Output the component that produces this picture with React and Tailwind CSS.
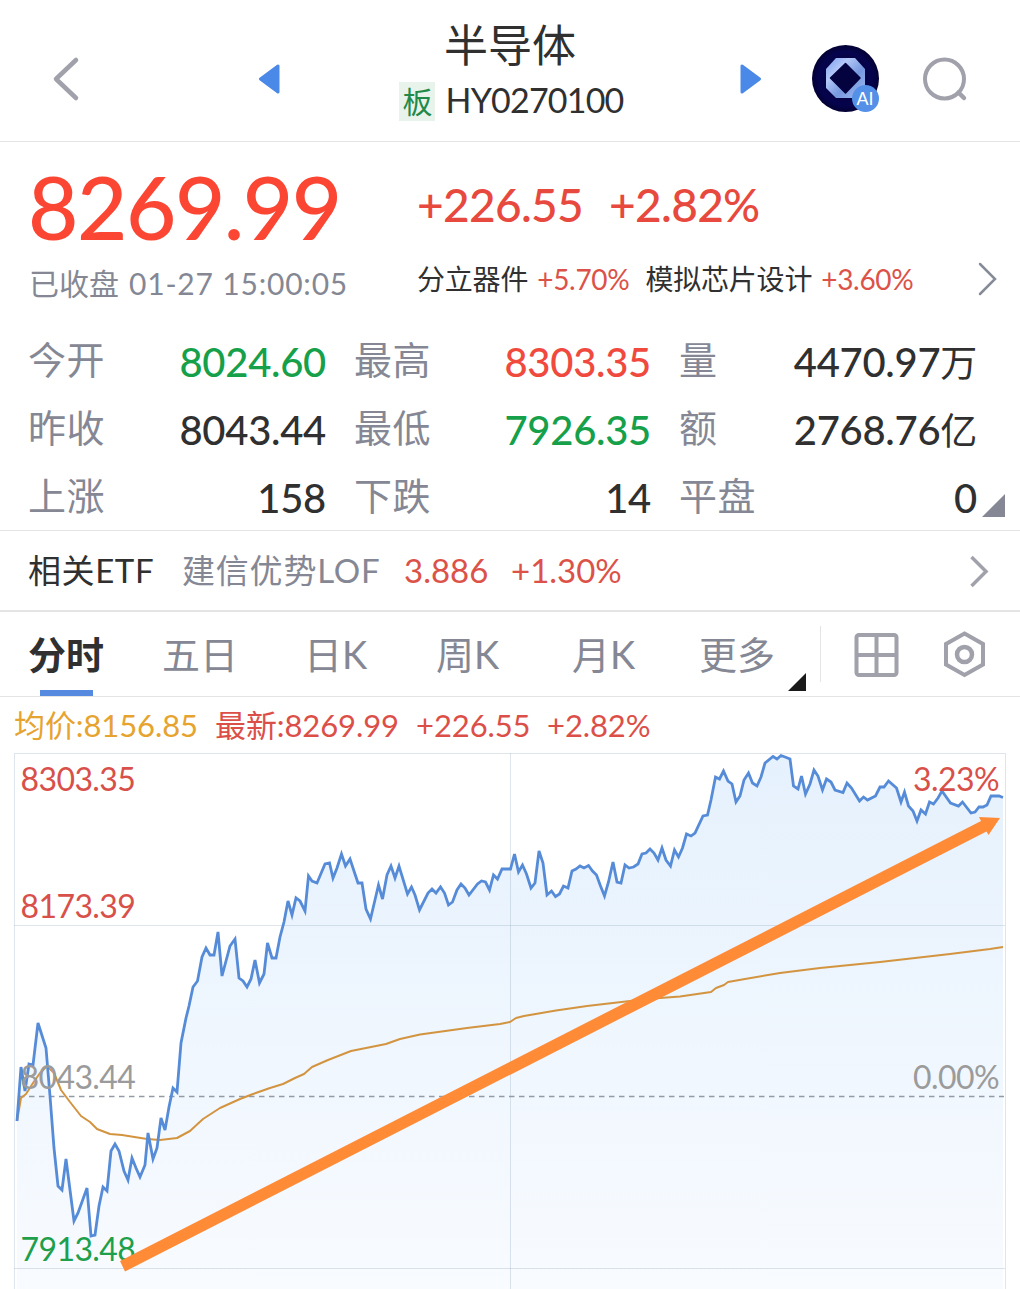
import React from 'react';

const RED = 'text-[#f04a3e]';
const GREEN = 'text-[#16a04a]';
const DARK = 'text-[#303030]';

const stats = [
  { label: '今开', value: '8024.60', color: GREEN },
  { label: '最高', value: '8303.35', color: RED },
  { label: '量', value: '4470.97', unit: '万', color: DARK },
  { label: '昨收', value: '8043.44', color: DARK },
  { label: '最低', value: '7926.35', color: GREEN },
  { label: '额', value: '2768.76', unit: '亿', color: DARK },
  { label: '上涨', value: '158', color: DARK },
  { label: '下跌', value: '14', color: DARK },
  { label: '平盘', value: '0', color: DARK },
];

const tabs = [
  { label: '分时', width: 'w-[134px]', active: true },
  { label: '五日', width: 'w-[142px]' },
  { label: '日K', width: 'w-[132px]' },
  { label: '周K', width: 'w-[136px]' },
  { label: '月K', width: 'w-[127px]' },
  { label: '更多', width: 'w-[77px]' },
];

const price =
  '17,1121 21,1067 25,1091 29,1064 33,1065 38,1023 46,1048 50,1096 54,1148 58,1186 62,1190 66,1159 70,1190 74,1221 78,1213 87,1188 91,1236 95,1235 99,1206 103,1187 107,1191 111,1151 115,1144 119,1151 124,1171 128,1180 132,1158 136,1168 140,1177 145,1165 148,1133 153,1159 157,1148 161,1118 165,1130 169,1107 173,1088 177,1092 181,1043 186,1018 189,1006 193,987 ' +
  '197.5,981 202,957 206,948 210,955 214,955 218,932 222,976 230,946 235,939 239,978 243,981 247,987 251,979 255,960 259.5,983 264,974 267.5,943 272,958 276,958 280,937 284,922 288,901 292,915 296,898 300,901 305,911 308.5,876 312,881 317,883 325,864 329.5,863 333,878 337,868 341.5,854 345.5,866 350,859 358,883 362,883 366,909 370.5,919 378.5,885 382.5,899 387,875 391,866 395,878 399,866 ' +
  '407.5,894 411.5,887 415,895 419.5,910 428,893 432,889 436,893 440.5,887 444.5,893 448.5,905 452.5,902 457,890 461,884 465,888 469,895 477.5,884 481.5,881 485.5,882 489.5,890 493.5,875 497.5,879 502,869 510.5,869 514.5,854 518.5,872 522.5,865 526.5,874 531,888 535,883 539,851 543,863 547,895 551.5,891 555.5,896.5 559.5,894 563.5,886 568,888 572,871 576,869 580,866 584,868 588.5,865.5 592.5,871 596.5,875 600.5,886 604.5,896 ' +
  '608.5,882 613,862 617,882 621,883 625,865 629,868 633.5,867 638,864 642,854 646,853 650,849 654,853 658,860 662,848 666,860 670.5,866 674.5,850 678.5,857 682.5,848 686.5,834 691,836 695,833 703,816 707.5,815 711,800 715.5,777 719.5,779 723.5,771 728,781 732,784 736,802 740,796 744,780 748.5,773 752.5,783 757,786 761,777 765,763 773,756.5 777,759 781,755.5 785,757 790,759 793.5,786 798,789 801.5,776 ' +
  '805.5,794 810,784 814,770 818,776 822.5,790 826.5,779 831,782 835,790 843,792.5 847,783 851.5,788 859.5,801 863.5,797 867.5,800 875.5,796 880,787 884,787 888.5,781 896.5,788 901,802 904.5,792 908.5,806 913,811 917,821 921,810 925.5,814 929.5,802 933.5,804 938,798 942,791 950.5,803 958.5,806 962.5,802 971,813 975,812 979,807 983,807 987,805 991,796 999,796 1003,797.5';

const average =
  '17,1121 21,1098 26,1094 33,1083 40,1073 47,1066 54,1073 61,1090 70,1102 81,1116 90,1122 97,1129 110,1134 122,1135 147,1139 160,1140 177,1138 190,1131 203,1119 220,1108 240,1099 253,1094 270,1088 283,1084 295,1078 304,1074 312,1067 328,1060 351,1051 386,1044 400,1039 420,1034.5 467,1028 500,1024 510,1022 516,1018 524,1016 556,1010.5 587,1006 630,1001 660,998 680,996.5 711,992 716,988 724,985 728,982 745,979 780,973 820,968 880,962 950,954 990,949 1003,947';

function Header() {
  return (
    <header className="flex h-[142px] items-start border-b border-[#e4e4e4]">
      <svg className="mt-[55px] ml-[50px] h-12 w-8" viewBox="0 0 32 48" fill="none">
        <path d="M26 5 L6 24 L26 43" stroke="#a0a1aa" strokeWidth="4.5" strokeLinecap="round" strokeLinejoin="round" />
      </svg>
      <svg className="mt-16 ml-[176px] h-[30px] w-[22px]" viewBox="0 0 22 30">
        <path d="M20 2 V28 L2.500 15 Z" fill="#4b89e8" stroke="#4b89e8" strokeWidth="3" strokeLinejoin="round" />
      </svg>
      <div className="ml-[60px] flex w-[340px] flex-col items-center">
        <h1 className="mt-[19px] text-[44px] leading-[52px] text-[#303030]">半导体</h1>
        <div className="mt-[12px] flex h-9 items-center gap-[10px] pl-[3px]">
          <span className="flex h-[39px] w-9 items-center justify-center bg-[#e8f3ec] text-[30px] leading-none text-[#1f8a4a]">板</span>
          <span className="pb-[3px] text-[34px] leading-none tracking-[-0.8px] text-[#303030]">HY0270100</span>
        </div>
      </div>
      <svg className="mt-16 ml-[60px] h-[30px] w-[22px]" viewBox="0 0 22 30">
        <path d="M2 2 V28 L19.500 15 Z" fill="#4b89e8" stroke="#4b89e8" strokeWidth="3" strokeLinejoin="round" />
      </svg>
      <svg className="mt-[45px] ml-[50px] h-[67px] w-[68px]" viewBox="0 0 68 67">
        <defs>
          <radialGradient id="orb">
            <stop offset="0.500" stopColor="#04023f" />
            <stop offset="0.800" stopColor="#06034e" />
            <stop offset="1" stopColor="#030132" />
          </radialGradient>
          <linearGradient id="oct" x1="0" y1="0" x2="1" y2="1">
            <stop offset="0" stopColor="#7d9df0" />
            <stop offset="0.300" stopColor="#b4c8f7" />
            <stop offset="0.600" stopColor="#7698df" />
            <stop offset="1" stopColor="#a5bdf2" />
          </linearGradient>
        </defs>
        <circle cx="33.500" cy="33.500" r="33.500" fill="url(#orb)" />
        <path d="M24 13 H43 L53 24 V43 L43 53 H24 L14 43 V24 Z" fill="url(#oct)" />
        <path d="M33.500 18.500 L48 33 L33.500 48 L18.500 33 Z" fill="#04023f" stroke="#04023f" strokeWidth="1.500" strokeLinejoin="round" />
        <circle cx="53.500" cy="53.500" r="13.500" fill="#5490e8" />
        <text x="53" y="60" textAnchor="middle" fontSize="18" fill="#fff" fontFamily="Liberation Sans">AI</text>
      </svg>
      <svg className="mt-[55px] ml-[41px] h-12 w-12" viewBox="0 0 48 48" fill="none" stroke="#a0a1aa" strokeWidth="4">
        <circle cx="23.500" cy="24" r="19.500" />
        <path d="M37.500 37.500 L43 43" strokeWidth="4.500" strokeLinecap="round" />
      </svg>
    </header>
  );
}

function Quote() {
  return (
    <section className="h-[389px] border-b border-[#e4e4e4]">
      <div className="flex h-[185px] pl-[28px]">
        <div className="w-[389px]">
          <div className="mt-[18px] text-[87px] leading-[94px] font-medium tracking-[-1.5px] text-[#fb4634]">8269.99</div>
          <div className="mt-[10px] flex gap-[10px] pl-px text-[30px] leading-[38px] text-[#858894]">
            <span>已收盘</span>
            <span className="tracking-[0.8px]">01-27 15:00:05</span>
          </div>
        </div>
        <div>
          <div className="mt-[36px] flex gap-[26px] text-[46px] leading-[54px] font-medium tracking-[-0.7px] text-[#e8493e]">
            <span>+226.55</span>
            <span>+2.82%</span>
          </div>
          <div className="mt-[29px] flex text-[28px] leading-[36px] tracking-[-0.2px] text-[#303030]">
            <span>分立器件</span>
            <span className="ml-[9px] tracking-[-0.3px] text-[#dc5248]">+5.70%</span>
            <span className="ml-4">模拟芯片设计</span>
            <span className="ml-[9px] tracking-[-0.3px] text-[#dc5248]">+3.60%</span>
          </div>
        </div>
        <svg className="mt-[118px] ml-[62px] h-10 w-6" viewBox="0 0 24 40" fill="none">
          <path d="M5 4 L20 19 L5 34" stroke="#858c98" strokeWidth="2.500" strokeLinecap="round" />
        </svg>
      </div>
      <div className="flex items-end pl-[28px]">
        <div className="grid grid-cols-[298px_297px_298px] gap-x-[28px]">
          {stats.map((s) => (
            <div key={s.label} className="flex h-[68px] items-center justify-between">
              <span className="pb-[5px] text-[38px] leading-[60px] tracking-[0.4px] text-[#858894]">{s.label}</span>
              <span className={`pt-[2px] text-[40px] leading-[60px] font-medium tracking-[-0.3px] ${s.color}`}>
                {s.value}
                {s.unit && <span className="text-[37px] font-normal">{s.unit}</span>}
              </span>
            </div>
          ))}
        </div>
        <svg className="mb-[14px] ml-[5px] h-[23px] w-[23px]" viewBox="0 0 23 23">
          <path d="M23 0 V23 H0 Z" fill="#858894" />
        </svg>
      </div>
    </section>
  );
}

function EtfRow() {
  return (
    <section className="flex h-[81px] items-center border-b-2 border-[#e4e4e4] pl-[28px] text-[33px] leading-[60px]">
      <span className="w-[154px] pb-[2px] tracking-[0.6px] text-[#303030]">相关ETF</span>
      <span className="w-[222px] pb-[2px] tracking-[0.8px] text-[#858894]">建信优势LOF</span>
      <span className="w-[107px] pb-[2px] text-[#dc5248]">3.886</span>
      <span className="w-[457px] pb-[2px] text-[#dc5248]">+1.30%</span>
      <svg className="h-9 w-6" viewBox="0 0 24 36" fill="none">
        <path d="M3.500 4 L18 18.500 L3.500 33" stroke="#a0a1aa" strokeWidth="3.500" />
      </svg>
    </section>
  );
}

function TabBar() {
  return (
    <nav className="flex h-[85px] border-b border-[#e4e4e4] pl-7">
      {tabs.map((tab) => (
        <div
          key={tab.label}
          className={`flex shrink-0 flex-col text-[38px] leading-[84px] ${tab.width} ${
            tab.active ? 'font-bold text-[#303030]' : 'text-[#858894]'
          }`}
        >
          <span className="h-[78px]">{tab.label}</span>
          {tab.active && <span className="ml-3 h-[6px] w-[53px] bg-[#558ae0]" />}
        </div>
      ))}
      <svg className="mt-[61px] ml-[12px] h-[18px] w-[18px]" viewBox="0 0 18 18">
        <path d="M18 0 V18 H0 Z" fill="#1a1a1a" />
      </svg>
      <div className="mt-[14px] ml-[14px] h-14 w-px bg-[#e4e4e4]" />
      <svg className="mt-[20px] ml-[33px] h-[46px] w-[46px]" viewBox="0 0 46 46" fill="none" stroke="#a0a1aa" strokeWidth="4">
        <rect x="2.500" y="3" width="40" height="40" rx="2.500" />
        <path d="M22.500 3 V43 M2.500 23 H42.500" />
      </svg>
      <svg className="mt-[19px] ml-[43px] h-12 w-[46px]" viewBox="0 0 46 48" fill="none" stroke="#a0a1aa" strokeWidth="4">
        <path d="M21.500 2.500 L40 13 V33.500 L21.500 44 L3 33.500 V13 Z" />
        <circle cx="21.500" cy="23.500" r="7.500" strokeWidth="4.500" />
      </svg>
    </nav>
  );
}

function Chart() {
  return (
    <section>
      <div className="flex h-[56px] pl-[14px] text-[31px] leading-[56px] tracking-[-0.1px] text-[#dc4f48]">
        <span className="w-[201px] text-[#e6a32e]">均价:8156.85</span>
        <span className="w-[201px]">最新:8269.99</span>
        <span className="w-[131px]">+226.55</span>
        <span>+2.82%</span>
      </div>
      <svg
        className="block h-[536px] w-[1020px] tracking-[-0.6px]"
        viewBox="0 753 1020 536"
        fontFamily="Lato"
        fontSize="32"
      >
        <defs>
          <linearGradient id="area" gradientUnits="userSpaceOnUse" x1="0" y1="753" x2="0" y2="1289">
            <stop offset="0" stopColor="#e5f1fd" />
            <stop offset="1" stopColor="#f8fbff" />
          </linearGradient>
        </defs>
        <polygon points={`17,1289 ${price} 1003,1289`} fill="url(#area)" />
        <path
          d="M14.500 1289 V753.500 H1005.500 V1289 M510.500 753 V1289 M14 925.500 H1005 M14 1268.500 H1005"
          fill="none"
          stroke="#8aa0b8"
          strokeOpacity="0.280"
        />
        <path d="M19 1096.500 H1004" stroke="#929aa5" strokeWidth="1.500" strokeDasharray="5.500 4.500" />
        <polyline points={average} fill="none" stroke="#d39440" strokeWidth="2" strokeLinejoin="round" />
        <polyline points={price} fill="none" stroke="#568bd8" strokeWidth="2.800" strokeLinejoin="miter" />
        <g fill="#d8504a">
          <text x="20.500" y="790.500">8303.35</text>
          <text x="20.500" y="917.500">8173.39</text>
          <text x="999" y="790.500" textAnchor="end">3.23%</text>
        </g>
        <g fill="#9b9b9b">
          <text x="20.500" y="1088.500">8043.44</text>
          <text x="999" y="1088.500" textAnchor="end">0.00%</text>
        </g>
        <text x="20.500" y="1260.500" fill="#1d9f4b">7913.48</text>
        <path d="M120 1261 L981 821 L979 817 L1000 818 L988.500 835 L986.500 831.500 L125 1271.500 Z" fill="#ff8b37" />
      </svg>
    </section>
  );
}

export default function App() {
  return (
    <main className="h-[1289px] w-[1020px] overflow-hidden bg-white font-['Lato','Noto_Sans_CJK_SC',sans-serif]">
      <Header />
      <Quote />
      <EtfRow />
      <TabBar />
      <Chart />
    </main>
  );
}
